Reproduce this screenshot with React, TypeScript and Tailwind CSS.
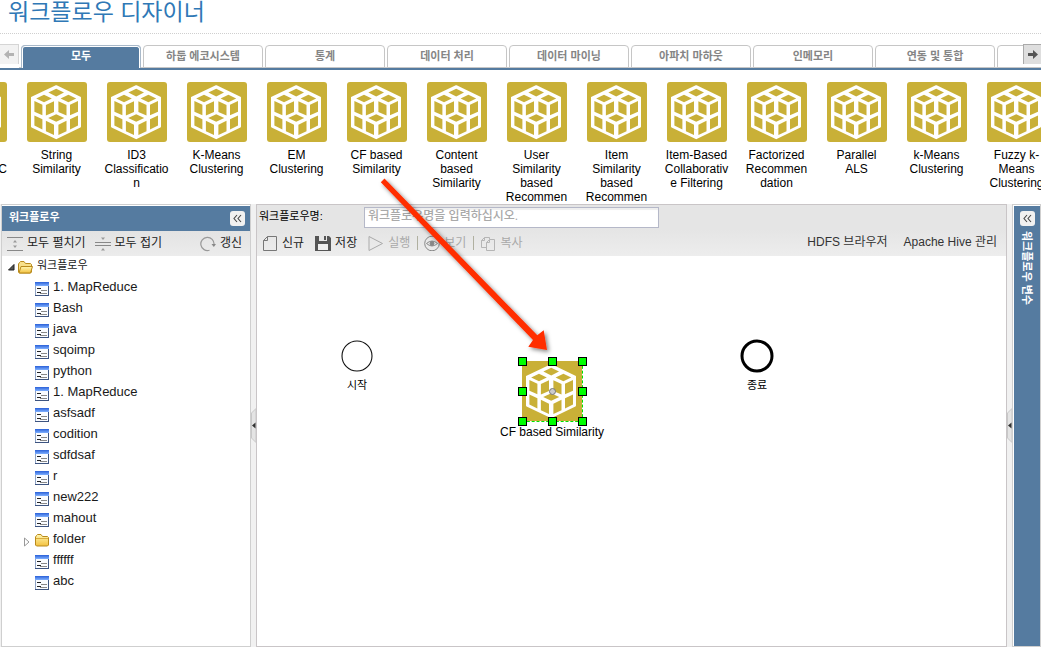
import React from 'react';

const FONT = "font-['Liberation_Sans','Noto_Sans_CJK_KR',sans-serif]";

const tabs = [
  '모두',
  '하둡 에코시스템',
  '통계',
  '데이터 처리',
  '데이터 마이닝',
  '아파치 마하웃',
  '인메모리',
  '연동 및 통합',
];

const modules = [
  'String Similarity',
  'ID3 Classification',
  'K-Means Clustering',
  'EM Clustering',
  'CF based Similarity',
  'Content based Similarity',
  'User Similarity based Recommen',
  'Item Similarity based Recommen',
  'Item-Based Collaborative Filtering',
  'Factorized Recommendation',
  'Parallel ALS',
  'k-Means Clustering',
  'Fuzzy k-Means Clustering',
];

type TreeEntry = { name: string; folder?: boolean };

const tree: TreeEntry[] = [
  { name: '1. MapReduce' },
  { name: 'Bash' },
  { name: 'java' },
  { name: 'sqoimp' },
  { name: 'python' },
  { name: '1. MapReduce' },
  { name: 'asfsadf' },
  { name: 'codition' },
  { name: 'sdfdsaf' },
  { name: 'r' },
  { name: 'new222' },
  { name: 'mahout' },
  { name: 'folder', folder: true },
  { name: 'ffffff' },
  { name: 'abc' },
];

function CubeIcon({ square = false }: { square?: boolean }) {
  return (
    <svg width="60" height="60" viewBox="0 0 60 60" className="block shrink-0" aria-hidden="true">
      <rect width="60" height="60" rx={square ? 0 : 3} fill="#c9b037" />
      <path
        d="M29.2 4.2 L53 15.6 V44.6 L29.2 56.2 L5 44.6 V15.6 Z"
        fill="#fff"
        stroke="#fff"
        strokeWidth="2"
        strokeLinejoin="round"
      />
      <g fill="#c9b037">
        <path d="M21.4 10.6 L29.2 6.8 L37 10.6 L29.2 14.4 Z" />
        <path d="M9.2 16.5 L17 12.7 L24.8 16.5 L17 20.3 Z" />
        <path d="M33.6 16.5 L41.4 12.7 L49.2 16.5 L41.4 20.3 Z" />
        <path d="M7.4 19 L15.4 22.8 V33.3 L7.4 29.8 Z" />
        <path d="M18.9 23 L27 19.2 V30 L18.9 33.6 Z" />
        <path d="M31.4 19.2 L39.5 23 V33.6 L31.4 30 Z" />
        <path d="M43 22.8 L51 19 V29.8 L43 33.3 Z" />
        <path d="M21.2 36 L29.2 32.2 L37.2 36 L29.2 39.8 Z" />
        <path d="M7.4 33.6 L15.4 37.2 V47.4 L7.4 43.6 Z" />
        <path d="M18.9 38.8 L27 42.7 V53 L18.9 49.2 Z" />
        <path d="M31.4 42.7 L39.5 38.8 V49.2 L31.4 53 Z" />
        <path d="M43 37.2 L51 33.6 V43.6 L43 47.4 Z" />
      </g>
    </svg>
  );
}

function DocIcon() {
  return (
    <svg width="14" height="14" viewBox="0 0 14 14" className="block shrink-0" aria-hidden="true">
      <defs>
        <linearGradient id="docHead" x1="0" x2="0" y1="0" y2="1">
          <stop offset="0" stopColor="#2a60d8" />
          <stop offset="1" stopColor="#7fb0ff" />
        </linearGradient>
      </defs>
      <rect x="0.5" y="0.5" width="13" height="13" fill="#fafcff" stroke="#8fa3c4" />
      <rect width="14" height="4" fill="url(#docHead)" />
      <path d="M0 13.5 H14 M13.5 4 V14" stroke="#3d5480" />
      <path d="M2 6.5 H6 M2 10.5 H6" stroke="#222" />
      <path d="M6 8.5 H12 M5 11.5 H12" stroke="#888" />
    </svg>
  );
}

function FolderIcon({ open = false }: { open?: boolean }) {
  return (
    <svg width="15" height="13" viewBox="0 0 15 13" className="block shrink-0" aria-hidden="true">
      <defs>
        <linearGradient id="folderFill" x1="0" x2="0" y1="0" y2="1">
          <stop offset="0" stopColor="#fff6b0" />
          <stop offset="1" stopColor="#f3c13f" />
        </linearGradient>
      </defs>
      <path
        d="M0.5 11 V3 L1.5 1.5 L2.5 0.5 H6 L7.5 2.5 H12.5 L13.5 3.5 V11 L12.5 12 H1.5 Z"
        fill={open ? '#f8e08a' : 'url(#folderFill)'}
        stroke="#b98a1c"
      />
      {open ? (
        <path d="M3 5.5 H14.5 L12.5 12 H1 Z" fill="url(#folderFill)" stroke="#b98a1c" />
      ) : (
        <path d="M1 4.5 H13" stroke="#d9ac3c" />
      )}
    </svg>
  );
}

function Chevrons({ label }: { label: string }) {
  return (
    <button
      type="button"
      aria-label={label}
      className="flex h-[15px] w-[15px] shrink-0 items-center justify-center rounded-[3px] bg-[#f1f1f1]"
    >
      <svg width="9" height="9" viewBox="0 0 9 9" fill="none" stroke="#444" strokeWidth="1.1" aria-hidden="true">
        <path d="M4 1 L1 4.5 L4 8 M8 1 L5 4.5 L8 8" />
      </svg>
    </button>
  );
}

function ToolButton({
  icon,
  children,
  disabled = false,
}: {
  icon: React.ReactNode;
  children: React.ReactNode;
  disabled?: boolean;
}) {
  return (
    <button
      type="button"
      disabled={disabled}
      className="flex shrink-0 items-center gap-1 whitespace-nowrap text-[#222] disabled:text-[#a9a9a9]"
    >
      {icon}
      <span className="pb-px">{children}</span>
    </button>
  );
}

function Splitter() {
  return (
    <div className="flex w-[5px] shrink-0 items-center bg-[#f1f1f1]">
      <svg width="5" height="35" viewBox="0 0 5 35" className="block" aria-hidden="true">
        <path d="M5 0.5 L0.5 5 V30 L5 34.5 Z" fill="#e4e4e4" stroke="#c8c8c8" />
        <path d="M4.5 14.5 V20.5 L1 17.5 Z" fill="#333" />
      </svg>
    </div>
  );
}

const handles = [
  'left-[-4px] top-[-4px]',
  'left-[26px] top-[-4px]',
  'left-[56px] top-[-4px]',
  'left-[-4px] top-[26px]',
  'left-[56px] top-[26px]',
  'left-[-4px] top-[56px]',
  'left-[26px] top-[56px]',
  'left-[56px] top-[56px]',
];

function Header() {
  return (
    <header className="h-[34px] shrink-0 overflow-hidden border-b border-dotted border-[#cfcfcf] pl-2">
      <h1 className="text-[23px] leading-[24px] text-[#2f78b6]">워크플로우 디자이너</h1>
    </header>
  );
}

function TabStrip() {
  return (
    <nav className="relative mt-[10px] flex h-[26px] shrink-0 items-end overflow-hidden border-b-2 border-[#557ba0]">
      <button
        type="button"
        aria-label="이전 탭"
        className="flex h-5 w-[19px] shrink-0 items-center justify-center self-start border-t border-r border-[#d5d5d5] bg-[#f2f2f2]"
      >
        <svg width="10" height="9" viewBox="0 0 10 9" fill="#b3b3b3" aria-hidden="true">
          <path d="M0 4.5 L5 0 V3 H10 V6 H5 V9 Z" />
        </svg>
      </button>
      <div className="flex h-[23px] flex-1 gap-[2px] overflow-hidden pl-[2px] shadow-[inset_0_-1px_0_#cccccc]">
        {tabs.map((tab, i) =>
          i === 0 ? (
            <button
              key={tab}
              type="button"
              className="w-[120px] shrink-0 rounded-t-[4px] border border-b-0 border-[#a9b9c9] bg-[#557ba0] text-[11px] font-bold text-white"
            >
              <span className="block h-full rounded-t-[3px] border border-b-0 border-white leading-[19px]">{tab}</span>
            </button>
          ) : (
            <button
              key={tab}
              type="button"
              className="w-[120px] shrink-0 rounded-t-[4px] border border-[#c6c6c6] pb-px text-[11px] leading-[20px] font-bold text-[#858585]"
            >
              {tab}
            </button>
          ),
        )}
        <span className="w-[120px] shrink-0 rounded-t-[4px] border border-[#c6c6c6]" />
      </div>
      <button
        type="button"
        aria-label="다음 탭"
        className="absolute top-0 right-0 flex h-5 w-[18px] items-center justify-center border-t border-l border-[#aaa] bg-[#dedede]"
      >
        <svg width="10" height="9" viewBox="0 0 10 9" fill="#555" aria-hidden="true">
          <path d="M10 4.5 L5 0 V3 H0 V6 H5 V9 Z" />
        </svg>
      </button>
    </nav>
  );
}

function Palette() {
  return (
    <section className="flex h-[134px] shrink-0 overflow-hidden pt-3">
      <div className="flex w-[7px] shrink-0 flex-col items-end overflow-hidden">
        <CubeIcon />
        <span className="mt-5 text-xs leading-[14px]">C</span>
      </div>
      <ul className="flex gap-[14px] pl-[17px]">
        {modules.map((name) => (
          <li key={name} className="flex w-[66px] shrink-0 flex-col items-center">
            <CubeIcon />
            <span className="mt-[6px] w-full pr-px text-center text-xs leading-[14px] break-words">{name}</span>
          </li>
        ))}
      </ul>
    </section>
  );
}

function Sidebar() {
  return (
    <aside className="flex w-[250px] shrink-0 flex-col border border-[#cfcfcf] bg-white pt-px">
      <div className="flex h-[25px] shrink-0 items-center justify-between bg-[#557ba0] pr-[5px] pl-[7px]">
        <h2 className="pb-[3px] text-[11px] font-bold text-white">워크플로우</h2>
        <Chevrons label="접기" />
      </div>
      <div className="flex h-[25px] shrink-0 items-center bg-gradient-to-b from-[#e3e3e3] to-[#ececec] pr-2 pl-[5px] text-[12px]">
        <ToolButton
          icon={
            <svg width="16" height="16" viewBox="0 0 16 16" fill="none" stroke="#888" aria-hidden="true">
              <path d="M0 1.5 H16 M0 14.5 H16" />
              <path d="M6 6.5 H10 L8 4 Z M6 9.5 H10 L8 12 Z" fill="#999" stroke="none" />
            </svg>
          }
        >
          모두 펼치기
        </ToolButton>
        <span className="w-[9px]" />
        <ToolButton
          icon={
            <svg width="16" height="16" viewBox="0 0 16 16" fill="none" stroke="#888" aria-hidden="true">
              <path d="M0 6.5 H16 M0 9.5 H16" />
              <path d="M6 1.5 H10 L8 4 Z M6 14.5 H10 L8 12 Z" fill="#999" stroke="none" />
            </svg>
          }
        >
          모두 접기
        </ToolButton>
        <span className="flex-1" />
        <ToolButton
          icon={
            <svg width="16" height="16" viewBox="0 0 16 16" fill="none" stroke="#999" aria-hidden="true">
              <path d="M9.5 14.2 A6.6 6.6 0 1 1 14 8.5" strokeWidth="1.2" />
              <path d="M11.5 8 H16 L13.8 11 Z" fill="#888" stroke="none" />
            </svg>
          }
        >
          갱신
        </ToolButton>
      </div>
      <ul className="text-[13px] leading-[19px] text-[#1a1a1a]">
        <li>
          <div className="flex h-[21px] items-start pl-[6px]">
            <svg width="7" height="7" viewBox="0 0 7 7" className="mt-[8px]" aria-hidden="true">
              <path d="M6 0.5 V6 H0.5 Z" fill="#555" stroke="#222" />
            </svg>
            <span className="mt-[5px] mr-1 ml-[3px]">
              <FolderIcon open />
            </span>
            <span className="text-[11px]">워크플로우</span>
          </div>
          <ul>
            {tree.map((entry, i) => (
              <li key={i} className="flex h-[21px] items-start pl-[21px]">
                <span className="mt-[8px] w-3">
                  {entry.folder && (
                    <svg width="7" height="10" viewBox="0 0 7 10" className="block" aria-hidden="true">
                      <path d="M1.5 1 L6 5 L1.5 9 Z" fill="#fff" stroke="#999" />
                    </svg>
                  )}
                </span>
                <span className="mt-[5px] mr-1 w-[14px]">{entry.folder ? <FolderIcon /> : <DocIcon />}</span>
                <span>{entry.name}</span>
              </li>
            ))}
          </ul>
        </li>
      </ul>
    </aside>
  );
}

function Designer() {
  return (
    <main className="flex min-w-0 flex-1 flex-col border border-[#c9c5c7] bg-white">
      <div className="flex h-[25px] shrink-0 items-center bg-[#e5e5e5] pl-[2px]">
        <label htmlFor="workflow-name" className="w-[105px] shrink-0 pb-[3px] text-[11px] text-black">
          워크플로우명:
        </label>
        <input
          id="workflow-name"
          type="text"
          placeholder="워크플로우명을 입력하십시오."
          className="h-[21px] w-[295px] border border-[#b5b8c8] bg-white px-[3px] pb-1 text-[12px] font-medium shadow-[inset_0_2px_1px_#eeeeee] outline-none placeholder:text-[#a9a9a9]"
        />
      </div>
      <div className="flex h-[26px] shrink-0 items-center overflow-hidden bg-gradient-to-b from-[#e5e5e5] to-[#ededed] pr-[9px] pl-[5px] text-[12px]">
        <ToolButton
          icon={
            <svg width="16" height="16" viewBox="0 0 16 16" fill="none" stroke="#777" aria-hidden="true">
              <path d="M5.5 1.5 H14.5 V15.5 H1.5 V5.5 Z M5.5 1.5 V5.5 H1.5" />
            </svg>
          }
        >
          신규
        </ToolButton>
        <span className="w-[11px]" />
        <ToolButton
          icon={
            <svg width="16" height="16" viewBox="0 0 16 16" aria-hidden="true">
              <path d="M0 1 H4 V6 H12 V1 H14 L16 3 V16 H0 Z" fill="#555" />
              <rect x="9" y="1" width="2" height="4" fill="#555" />
              <rect x="3" y="9" width="10" height="6" fill="#f0f0f0" />
            </svg>
          }
        >
          저장
        </ToolButton>
        <span className="w-[11px]" />
        <ToolButton
          disabled
          icon={
            <svg width="16" height="16" viewBox="0 0 16 16" fill="none" stroke="#aaa" aria-hidden="true">
              <path d="M1 1.5 L14.5 8.5 L1 15.5 Z" />
            </svg>
          }
        >
          실행
        </ToolButton>
        <span className="mr-[6px] ml-[7px] h-[14px] w-px bg-[#b0b0a0]" />
        <ToolButton
          disabled
          icon={
            <svg width="16" height="16" viewBox="0 0 16 16" fill="none" stroke="#888" aria-hidden="true">
              <circle cx="8" cy="8.5" r="7.3" />
              <path d="M2.5 8.5 Q8 3.5 13.5 8.5 Q8 13.5 2.5 8.5 Z" />
              <circle cx="8" cy="8.5" r="2" fill="#888" />
            </svg>
          }
        >
          보기
        </ToolButton>
        <span className="mr-[6px] ml-[7px] h-[14px] w-px bg-[#b0b0a0]" />
        <ToolButton
          disabled
          icon={
            <svg width="16" height="16" viewBox="0 0 16 16" fill="none" stroke="#b5b5b5" aria-hidden="true">
              <path d="M6.5 12.5 H1.5 V5.5 L4.5 2.5 H9.5 V4 M4.5 2.5 V5.5 H1.5" />
              <path d="M9.5 4.5 H14.5 V15.5 H6.5 V7.5 Z M9.5 4.5 V7.5 H6.5" />
            </svg>
          }
        >
          복사
        </ToolButton>
        <span className="flex-1" />
        <div className="flex shrink-0 gap-4 pb-[2px] whitespace-nowrap text-[#333]">
          <button type="button">HDFS 브라우저</button>
          <button type="button">Apache Hive 관리</button>
        </div>
      </div>
      <div className="relative flex-1 overflow-hidden text-[12px] leading-[14px] text-black">
        <div className="absolute top-[84px] left-[70px] flex w-[60px] flex-col items-center gap-[6px]">
          <svg width="32" height="32" viewBox="0 0 32 32" aria-hidden="true">
            <circle cx="16" cy="16" r="15" fill="#fff" stroke="#111" strokeWidth="1.1" />
          </svg>
          <span className="text-[11px]">시작</span>
        </div>
        <div className="absolute top-[84px] left-[470px] flex w-[60px] flex-col items-center gap-[6px]">
          <svg width="34" height="32" viewBox="0 0 34 32" className="overflow-visible" aria-hidden="true">
            <circle cx="17" cy="16" r="15" fill="#fff" stroke="#000" strokeWidth="3" />
          </svg>
          <span className="text-[11px]">종료</span>
        </div>
        <div className="absolute top-[105px] left-[235px] flex w-[120px] flex-col items-center gap-1">
          <div className="relative">
            <CubeIcon square />
            <div className="absolute top-0 left-0 h-[61px] w-[61px] border-r border-b border-dashed border-[#00e000]" />
            <span className="absolute top-[27px] left-[27px] h-[7px] w-[7px] rounded-full border border-[#777] bg-[#ccc]" />
            {handles.map((place) => (
              <span key={place} className={`absolute h-[9px] w-[9px] border border-black bg-[#00ff00] ${place}`} />
            ))}
          </div>
          <span className="whitespace-nowrap">CF based Similarity</span>
        </div>
      </div>
    </main>
  );
}

function VariablesRail() {
  return (
    <aside className="w-[29px] shrink-0 border border-[#cfcfcf] bg-white p-px pr-0 pb-0">
      <div className="flex h-full flex-col items-center gap-[5px] bg-[#557ba0] pt-[5px]">
        <Chevrons label="펼치기" />
        <h2 className="text-[11px] leading-[16px] font-bold whitespace-nowrap text-white [text-orientation:sideways] [writing-mode:vertical-rl]">
          워크플로우 변수
        </h2>
      </div>
    </aside>
  );
}

export default function App() {
  return (
    <div className={`relative flex min-h-screen flex-col overflow-hidden bg-white text-black ${FONT}`}>
      <Header />
      <TabStrip />
      <Palette />
      <div className="flex flex-1 bg-[#f1f1f1] pl-px">
        <Sidebar />
        <Splitter />
        <Designer />
        <Splitter />
        <VariablesRail />
      </div>
      <svg
        width="190"
        height="190"
        viewBox="0 0 190 190"
        className="pointer-events-none absolute top-[170px] left-[374px]"
        aria-hidden="true"
      >
        <defs>
          <filter id="arrowShadow" x="-10%" y="-10%" width="125%" height="125%">
            <feDropShadow dx="2" dy="2" stdDeviation="2" floodColor="#000" floodOpacity="0.5" />
          </filter>
        </defs>
        <path
          d="M10.5 8.5 L163.3 165.3 L169.7 160.3 L173 180 L154.3 176.7 L159 170 L6.8 12.2 Z"
          fill="#ff2d00"
          filter="url(#arrowShadow)"
        />
      </svg>
    </div>
  );
}
